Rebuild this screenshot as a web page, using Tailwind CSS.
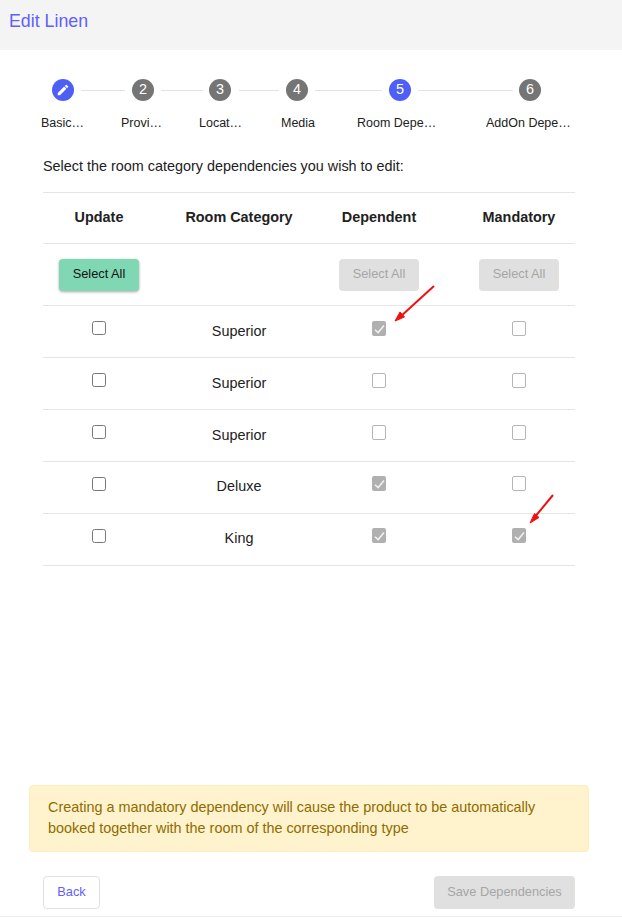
<!DOCTYPE html>
<html lang="en">
<head>
    <meta charset="UTF-8">
    <title>Edit Linen</title>
    <meta name="viewport" content="width=device-width, initial-scale=1.0">
    <script src="https://cdn.jsdelivr.net/npm/@tailwindcss/browser@4"></script>
</head>
<body class="bg-white font-['Liberation_Sans',Arial,sans-serif] text-[#212121]">
<div class="relative flex flex-col h-[917px] w-[622px] overflow-hidden border-b border-[#eeeeee]">

    <!-- header -->
    <header class="h-[50px] shrink-0 bg-[#f4f4f4] pl-[9px] pt-[10px] text-[17.8px] leading-[22px] text-[#5f5fff]">Edit Linen</header>

    <!-- stepper -->
    <div class="flex items-center h-[22px] mt-[29px] pl-[52px] text-[14.4px] text-white">
        <div class="flex items-center justify-center w-[22px] h-[22px] rounded-full bg-[#4d5ff5]">
            <svg class="w-[14px] h-[14px]" viewBox="0 0 24 24" fill="#fff"><path d="M3 17.25V21h3.75L17.81 9.94l-3.75-3.75L3 17.25zM20.71 7.04a1 1 0 0 0 0-1.41l-2.34-2.34a1 1 0 0 0-1.41 0l-1.83 1.83 3.75 3.75 1.83-1.83z"/></svg>
        </div>
        <div class="h-px w-[44px] mx-[7px] bg-[#e3e3e3]"></div>
        <div class="flex items-center justify-center w-[22px] h-[22px] rounded-full bg-[#757575]">2</div>
        <div class="h-px w-[42px] ml-[7px] mr-[6px] bg-[#e3e3e3]"></div>
        <div class="flex items-center justify-center w-[22px] h-[22px] rounded-full bg-[#757575]">3</div>
        <div class="h-px w-[40px] ml-[8px] mr-[7px] bg-[#e3e3e3]"></div>
        <div class="flex items-center justify-center w-[22px] h-[22px] rounded-full bg-[#757575]">4</div>
        <div class="h-px w-[67px] mx-[7px] bg-[#e3e3e3]"></div>
        <div class="flex items-center justify-center w-[22px] h-[22px] rounded-full bg-[#4d5ff5]">5</div>
        <div class="h-px w-[95px] ml-[7px] mr-[6px] bg-[#e3e3e3]"></div>
        <div class="flex items-center justify-center w-[22px] h-[22px] rounded-full bg-[#757575]">6</div>
    </div>
    <div class="flex pl-[41px] h-[16px] mt-[14px] text-[12.5px] leading-[16px]">
        <div class="w-[46px] mr-[34px] truncate">Basic Information</div>
        <div class="w-[41px] mr-[37px] truncate">Provider</div>
        <div class="w-[45px] mr-[37px] truncate">Location</div>
        <div class="w-[35px] mr-[41px] truncate">Media</div>
        <div class="w-[82px] mr-[47px] truncate">Room Dependencies</div>
        <div class="w-[88px] truncate">AddOn Dependencies</div>
    </div>

    <main class="flex-1 pl-[43px] pr-[47px]">
        <p class="mt-[26px] text-[14.4px] leading-[18px]">Select the room category dependencies you wish to edit:</p>

        <div class="mt-[17px] border-t border-[#e5e5e5] text-[14.4px]">
            <div class="grid grid-cols-4 gap-x-[60px] px-4 h-[51px] items-center text-center font-bold border-b border-[#e5e5e5]">
                <div>Update</div>
                <div class="whitespace-nowrap -mx-4">Room Category</div>
                <div>Dependent</div>
                <div>Mandatory</div>
            </div>
            <div class="grid grid-cols-4 gap-x-[60px] px-4 h-[62px] items-center border-b border-[#e5e5e5] text-[12.8px]">
                <button class="h-[32px] pb-[2px] rounded bg-[#7fd8b3] text-[#111] shadow-[0_1px_3px_rgba(0,0,0,0.35)]">Select All</button>
                <div></div>
                <button disabled class="h-[32px] pb-[2px] rounded bg-[#e0e0e0] text-[#a6a6a6]">Select All</button>
                <button disabled class="h-[32px] pb-[2px] rounded bg-[#e0e0e0] text-[#a6a6a6]">Select All</button>
            </div>

            <div class="grid grid-cols-4 gap-x-[60px] px-4 h-[52px] border-b border-[#e5e5e5] text-center">
                <div class="pt-[15px] flex justify-center"><input type="checkbox" class="w-[14px] h-[14px] m-0"></div>
                <div class="pt-[16px] leading-[18px]">Superior</div>
                <div class="pt-[15px] flex justify-center">
                    <span class="w-[14px] h-[15px] rounded-[2px] bg-[#b0b0b0]"><svg width="14" height="15" viewBox="0 0 14 15" fill="none"><path d="M3 8.7L6.2 11.6L12 4.6" stroke="#f2f2f2" stroke-width="1.5"/></svg></span>
                </div>
                <div class="pt-[15px] flex justify-center"><span class="w-[14px] h-[15px] rounded-[2px] border border-[#b5b5b5] bg-white"></span></div>
            </div>
            <div class="grid grid-cols-4 gap-x-[60px] px-4 h-[52px] border-b border-[#e5e5e5] text-center">
                <div class="pt-[15px] flex justify-center"><input type="checkbox" class="w-[14px] h-[14px] m-0"></div>
                <div class="pt-[16px] leading-[18px]">Superior</div>
                <div class="pt-[15px] flex justify-center"><span class="w-[14px] h-[15px] rounded-[2px] border border-[#b5b5b5] bg-white"></span></div>
                <div class="pt-[15px] flex justify-center"><span class="w-[14px] h-[15px] rounded-[2px] border border-[#b5b5b5] bg-white"></span></div>
            </div>
            <div class="grid grid-cols-4 gap-x-[60px] px-4 h-[52px] border-b border-[#e5e5e5] text-center">
                <div class="pt-[15px] flex justify-center"><input type="checkbox" class="w-[14px] h-[14px] m-0"></div>
                <div class="pt-[16px] leading-[18px]">Superior</div>
                <div class="pt-[15px] flex justify-center"><span class="w-[14px] h-[15px] rounded-[2px] border border-[#b5b5b5] bg-white"></span></div>
                <div class="pt-[15px] flex justify-center"><span class="w-[14px] h-[15px] rounded-[2px] border border-[#b5b5b5] bg-white"></span></div>
            </div>
            <div class="grid grid-cols-4 gap-x-[60px] px-4 h-[52px] border-b border-[#e5e5e5] text-center">
                <div class="pt-[15px] flex justify-center"><input type="checkbox" class="w-[14px] h-[14px] m-0"></div>
                <div class="pt-[15px] leading-[18px]">Deluxe</div>
                <div class="pt-[14px] flex justify-center">
                    <span class="w-[14px] h-[15px] rounded-[2px] bg-[#b0b0b0]"><svg width="14" height="15" viewBox="0 0 14 15" fill="none"><path d="M3 8.7L6.2 11.6L12 4.6" stroke="#f2f2f2" stroke-width="1.5"/></svg></span>
                </div>
                <div class="pt-[14px] flex justify-center"><span class="w-[14px] h-[15px] rounded-[2px] border border-[#b5b5b5] bg-white"></span></div>
            </div>
            <div class="grid grid-cols-4 gap-x-[60px] px-4 h-[52px] border-b border-[#e5e5e5] text-center">
                <div class="pt-[15px] flex justify-center"><input type="checkbox" class="w-[14px] h-[14px] m-0"></div>
                <div class="pt-[15px] leading-[18px]">King</div>
                <div class="pt-[14px] flex justify-center">
                    <span class="w-[14px] h-[15px] rounded-[2px] bg-[#b0b0b0]"><svg width="14" height="15" viewBox="0 0 14 15" fill="none"><path d="M3 8.7L6.2 11.6L12 4.6" stroke="#f2f2f2" stroke-width="1.5"/></svg></span>
                </div>
                <div class="pt-[14px] flex justify-center">
                    <span class="w-[14px] h-[15px] rounded-[2px] bg-[#b0b0b0]"><svg width="14" height="15" viewBox="0 0 14 15" fill="none"><path d="M3 8.7L6.2 11.6L12 4.6" stroke="#f2f2f2" stroke-width="1.5"/></svg></span>
                </div>
            </div>
        </div>
    </main>

    <!-- notice -->
    <div class="ml-[29px] mr-[33px] h-[67px] pl-[18px] pr-[40px] pt-[11px] rounded border border-[#ffeeba] bg-[#fff3cd] text-[#8f6b00] text-[14.4px] leading-[21px]">
        Creating a mandatory dependency will cause the product to be automatically booked together with the room of the corresponding type
    </div>

    <!-- footer -->
    <div class="flex justify-between pl-[43px] pr-[47px] mt-[24px] mb-[7px] text-[12.8px]">
        <button class="h-[33px] w-[57px] pb-[2px] rounded border border-[#e0e0e0] bg-white text-[#5f5fff]">Back</button>
        <button disabled class="h-[33px] w-[141px] pb-[2px] rounded bg-[#e0e0e0] text-[#a6a6a6]">Save Dependencies</button>
    </div>

    <!-- red annotation arrows -->
    <svg class="absolute left-0 top-0 pointer-events-none" width="622" height="917" fill="none">
        <path d="M434 286L400 317" stroke="#f01010" stroke-width="2"/>
        <path d="M395 321L404.5 317L400 312Z" fill="#f01010" stroke="#f01010"/>
        <path d="M553 495L534 518" stroke="#f01010" stroke-width="2"/>
        <path d="M530 523L539 517.5L534.5 513.5Z" fill="#f01010" stroke="#f01010"/>
    </svg>
</div>
</body>
</html>
